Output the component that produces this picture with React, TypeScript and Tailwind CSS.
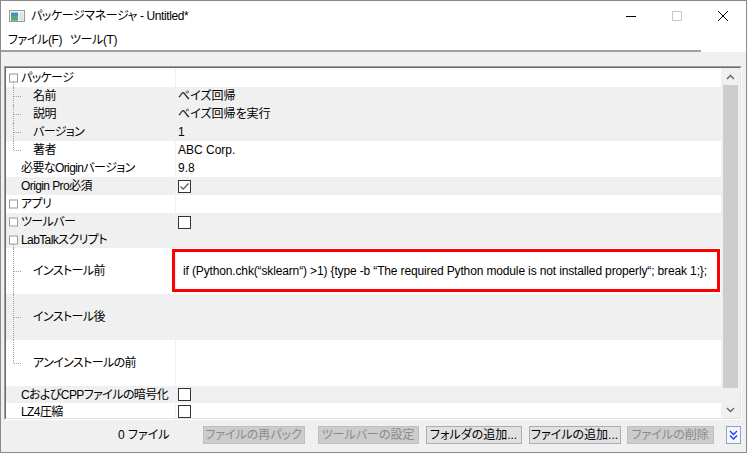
import React from 'react';

type Row = {
  label: string;
  kind: 'group' | 'child' | 'top';
  shade: boolean;
  height: string;
  value?: string;
  check?: 'on' | 'off';
  open?: boolean;
  last?: boolean;
  mark?: boolean;
};

const rows: Row[] = [
  { label: 'パッケージ', kind: 'group', shade: false, height: 'h-[19px]', open: true },
  { label: '名前', kind: 'child', shade: true, height: 'h-[18px]', value: 'ベイズ回帰' },
  { label: '説明', kind: 'child', shade: true, height: 'h-[18px]', value: 'ベイズ回帰を実行' },
  { label: 'バージョン', kind: 'child', shade: true, height: 'h-[18px]', value: '1' },
  { label: '著者', kind: 'child', shade: false, height: 'h-[18px]', value: 'ABC Corp.', last: true },
  { label: '必要なOriginバージョン', kind: 'top', shade: false, height: 'h-[18px]', value: '9.8' },
  { label: 'Origin Pro必須', kind: 'top', shade: true, height: 'h-[18px]', check: 'on' },
  { label: 'アプリ', kind: 'group', shade: false, height: 'h-[18px]' },
  { label: 'ツールバー', kind: 'group', shade: true, height: 'h-[18px]', check: 'off' },
  { label: 'LabTalkスクリプト', kind: 'group', shade: true, height: 'h-[17px]', open: true },
  { label: 'インストール前', kind: 'child', shade: false, height: 'h-[46px]', mark: true },
  { label: 'インストール後', kind: 'child', shade: true, height: 'h-[46px]' },
  { label: 'アンインストールの前', kind: 'child', shade: false, height: 'h-[46px]', last: true },
  { label: 'CおよびCPPファイルの暗号化', kind: 'top', shade: true, height: 'h-[17px]', check: 'off' },
  { label: 'LZ4圧縮', kind: 'top', shade: false, height: 'h-[17px]', check: 'off' },
];

const script =
  'if (Python.chk(“sklearn“) >1) {type -b “The required Python module is not installed properly“; break  1;};';

function CheckBox({ on }: { on: boolean }) {
  return (
    <div className="w-[13px] h-[13px] border border-[#333333] bg-white flex items-center justify-center">
      {on && (
        <svg width="11" height="11" viewBox="0 0 11 11">
          <path d="M1.5 5.5 L4.2 8.2 L9.5 2.5" fill="none" stroke="#555555" strokeWidth="1.2" />
        </svg>
      )}
    </div>
  );
}

function GridRow({ row }: { row: Row }) {
  const bg = row.shade ? 'bg-[#f0f0f0]' : 'bg-white';
  return (
    <div className={`flex ${row.height} ${bg} relative shrink-0`}>
      <div className="w-[169px] relative flex items-center">
        {row.kind === 'group' && (
          <>
            <div className="absolute left-[3px] top-1/2 -translate-y-1/2 w-[9px] h-[9px] border border-[#9a9a9a] bg-white" />
            {row.open && (
              <div className="absolute left-[7px] top-[13px] bottom-0 border-l border-dotted border-[#a0a0a0]" />
            )}
          </>
        )}
        {row.kind === 'child' && (
          <>
            <div
              className={`absolute left-[7px] top-0 border-l border-dotted border-[#a0a0a0] ${row.last ? 'h-1/2' : 'bottom-0'}`}
            />
            <div className="absolute left-[8px] top-1/2 w-[7px] border-t border-dotted border-[#a0a0a0]" />
          </>
        )}
        <span
          className={`whitespace-nowrap tracking-[-0.6px] ${row.kind === 'child' ? 'pl-[27px]' : 'pl-[15px]'}`}
        >
          {row.label}
        </span>
      </div>
      <div className="w-px bg-[#f0f0f0]" />
      <div className="flex-1 flex items-center pl-[2px] whitespace-nowrap overflow-hidden">
        {row.value}
        {row.check && <CheckBox on={row.check === 'on'} />}
        {row.mark && <span className="pl-[5px] tracking-[-0.14px]">{script}</span>}
      </div>
      {row.mark && (
        <div className="absolute left-[166px] right-px top-px bottom-[2px] border-[3px] border-[#ff0000]" />
      )}
    </div>
  );
}

function Button({ label, on, w }: { label: string; on: boolean; w: string }) {
  return (
    <div
      className={`${w} h-[18px] border flex items-center justify-center whitespace-nowrap ${
        on ? 'bg-[#e1e1e1] border-[#adadad] text-black' : 'bg-[#cccccc] border-[#bfbfbf] text-[#8a8a8a]'
      }`}
    >
      {label}
    </div>
  );
}

export default function App() {
  return (
    <div className="w-[747px] h-[453px] border border-[#8a8a8a] bg-[#f0f0f0] flex flex-col overflow-hidden text-[12px] leading-none text-black font-['Liberation_Sans','Noto_Sans_CJK_JP',sans-serif] [font-feature-settings:'palt']">
      <div className="h-[29px] bg-white flex items-center shrink-0">
        <svg className="ml-[8px]" width="16" height="12" viewBox="0 0 16 12">
          <rect x="0.5" y="0.5" width="15" height="11" fill="#f4f4f4" stroke="#9a9a9a" />
          <rect x="2" y="2.5" width="7" height="8" fill="#4a90b8" />
          <rect x="2" y="6" width="7" height="4.5" fill="#5aa878" />
          <rect x="10.5" y="2.5" width="4" height="8" fill="#d9e4dc" />
        </svg>
        <span className="ml-[6px] tracking-[-0.4px]">パッケージマネージャ - Untitled*</span>
        <div className="ml-auto flex items-center">
          <svg width="46" height="29" viewBox="0 0 46 29">
            <path d="M18 15.5 H28" stroke="#000" strokeWidth="1" />
          </svg>
          <svg width="46" height="29" viewBox="0 0 46 29">
            <rect x="18.5" y="10.5" width="9" height="9" fill="none" stroke="#c8c8c8" />
          </svg>
          <svg width="46" height="29" viewBox="0 0 46 29">
            <path d="M18 10 L28 20 M28 10 L18 20" stroke="#000" strokeWidth="1" />
          </svg>
        </div>
      </div>
      <div className="h-[20px] bg-white flex items-center shrink-0 tracking-[-0.4px]">
        <span className="ml-[7px] w-[62px]">ファイル(F)</span>
        <span>ツール(T)</span>
      </div>
      <div className="h-[2px] flex shrink-0">
        <div className="w-[700px] bg-[#a0a0a0]" />
        <div className="flex-1 bg-white" />
      </div>
      <div className="pt-[14px] pl-[3px] shrink-0">
        <div className="w-[738px] h-[354px] border border-t-[#a0a0a0] border-l-[#a0a0a0] border-b-white border-r-white">
          <div className="h-full border border-t-[#696969] border-l-[#696969] border-b-[#e3e3e3] border-r-[#e3e3e3] bg-[#f0f0f0] flex overflow-hidden">
            <div className="w-[715px] flex flex-col overflow-hidden">
              {rows.map((r) => (
                <GridRow key={r.label} row={r} />
              ))}
            </div>
            <div className="w-[17px] ml-px flex flex-col">
              <div className="h-[17px] flex items-center justify-center">
                <svg width="9" height="6" viewBox="0 0 9 6">
                  <path d="M1 5 L4.5 1.5 L8 5" fill="none" stroke="#606060" strokeWidth="1.3" />
                </svg>
              </div>
              <div className="h-[303px] mx-px bg-[#cdcdcd]" />
              <div className="flex-1" />
              <div className="h-[17px] flex items-center justify-center">
                <svg width="9" height="6" viewBox="0 0 9 6">
                  <path d="M1 1 L4.5 4.5 L8 1" fill="none" stroke="#606060" strokeWidth="1.3" />
                </svg>
              </div>
            </div>
          </div>
        </div>
      </div>
      <div className="flex items-center pt-[6px] shrink-0">
        <span className="ml-[117px]">0 ファイル</span>
        <div className="ml-[33px]">
          <Button label="ファイルの再パック" on={false} w="w-[102px]" />
        </div>
        <div className="ml-[13px]">
          <Button label="ツールバーの設定" on={false} w="w-[101px]" />
        </div>
        <div className="ml-[7px]">
          <Button label="フォルダの追加..." on={true} w="w-[96px]" />
        </div>
        <div className="ml-[7px]">
          <Button label="ファイルの追加..." on={true} w="w-[92px]" />
        </div>
        <div className="ml-[6px]">
          <Button label="ファイルの削除" on={false} w="w-[87px]" />
        </div>
        <div className="ml-[12px] w-[15px] h-[18px] border border-[#8aa2cf] bg-[#f7f7f7] flex items-center justify-center">
          <svg width="9" height="12" viewBox="0 0 9 12">
            <path d="M1 2 L4.5 5.5 L8 2 M1 6.5 L4.5 10 L8 6.5" fill="none" stroke="#1a3cff" strokeWidth="1.4" />
          </svg>
        </div>
      </div>
    </div>
  );
}
